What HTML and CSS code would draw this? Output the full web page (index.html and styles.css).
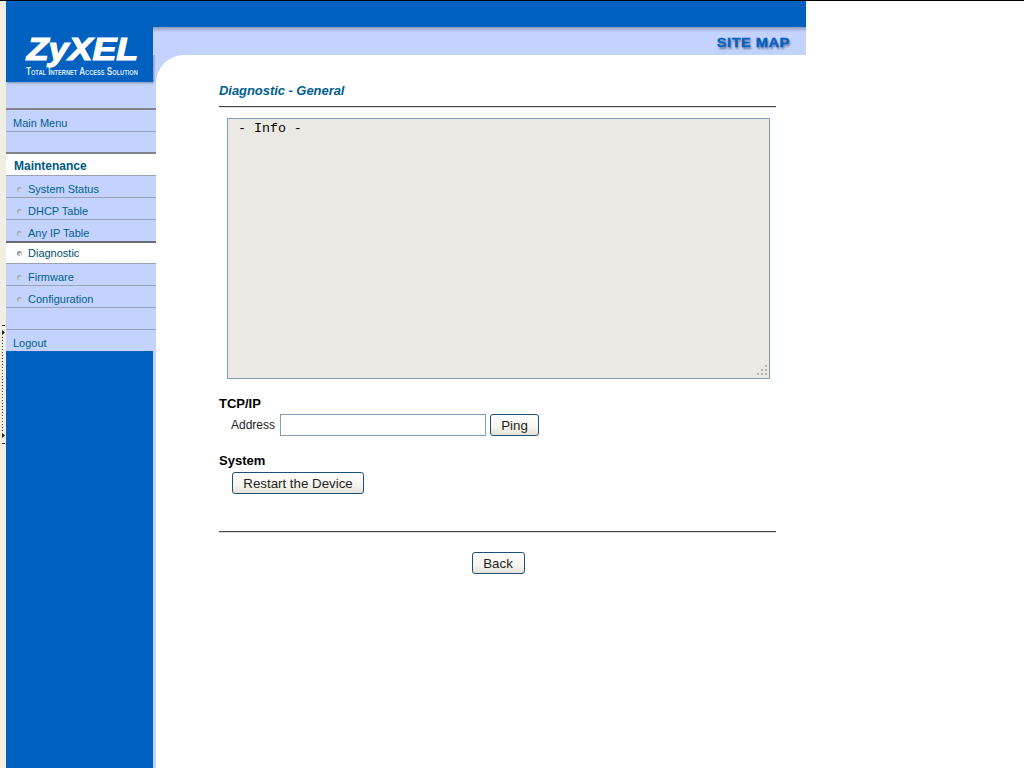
FILE: index.html
```html
<!DOCTYPE html>
<html lang="en">
<head>
<meta charset="utf-8">
<title>Diagnostic - General</title>
<link rel="stylesheet" href="styles.css">
</head>
<body>
<div class="page">
  <div class="strip">
    <svg width="6" height="767" viewBox="0 0 6 767">
      <rect x="2" y="324" width="3" height="1" fill="#333"/>
      <path d="M2 329l3 2.500-3 2.500z" fill="#222"/>
      <path d="M2 432l3 2.500-3 2.500z" fill="#222"/>
      <rect x="2" y="442" width="3" height="1" fill="#333"/>
      <line x1="2.500" y1="336" x2="2.500" y2="431" stroke="#444" stroke-dasharray="1 2"/>
    </svg>
  </div>
  <div class="frame">
    <aside class="side">
      <div class="logo">
        <div class="logo-name">ZyXEL</div>
        <div class="logo-tag">Total Internet Access Solution</div>
      </div>
      <nav class="menu">
        <div class="row top first">Main Menu</div>
        <div class="row"></div>
        <div class="row head dark">Maintenance</div>
        <div class="row sub"><i class="dot"></i>System Status</div>
        <div class="row sub"><i class="dot"></i>DHCP Table</div>
        <div class="row sub"><i class="dot"></i>Any IP Table</div>
        <div class="row sub current"><i class="dot"></i>Diagnostic</div>
        <div class="row sub"><i class="dot"></i>Firmware</div>
        <div class="row sub"><i class="dot"></i>Configuration</div>
        <div class="row"></div>
        <div class="row top">Logout</div>
      </nav>
      <div class="side-fill"></div>
    </aside>
    <div class="right">
      <div class="band-top"></div>
      <div class="band"><span class="sitemap">SITE MAP</span></div>
      <main class="content">
        <h1 class="title">Diagnostic - General</h1>
        <div class="info-wrap">
          <textarea class="info" readonly> - Info -</textarea>
          <svg class="grip" width="12" height="12" viewBox="0 0 12 12">
            <g fill="#b5b3a8">
              <rect x="9" y="1" width="2" height="2"/>
              <rect x="5" y="5" width="2" height="2"/><rect x="9" y="5" width="2" height="2"/>
              <rect x="1" y="9" width="2" height="2"/><rect x="5" y="9" width="2" height="2"/><rect x="9" y="9" width="2" height="2"/>
            </g>
          </svg>
        </div>
        <h2 class="section tcp">TCP/IP</h2>
        <div class="ping-row">
          <label class="addr" for="addr">Address</label>
          <input class="field" id="addr" type="text">
          <button class="btn ping">Ping</button>
        </div>
        <h2 class="section system">System</h2>
        <div class="restart-row"><button class="btn restart">Restart the Device</button></div>
        <div class="footer"><button class="btn back">Back</button></div>
      </main>
    </div>
  </div>
</div>
</body>
</html>
```
FILE: styles.css
```css
html, body { margin: 0; padding: 0; background: #fff; height: 768px; overflow: hidden; }
body { font-family: "Liberation Sans", Arial, sans-serif; }
.page { display: flex; height: 767px; border-top: 1px solid #000; }
.strip { width: 6px; background: #f1efe2; flex: none; }
.strip svg { display: block; }
.frame { display: flex; width: 800px; flex: none; }

.side { width: 150px; flex: none; display: flex; flex-direction: column; background: #c4d3fd; }
.logo { height: 81px; width: 147px; box-sizing: border-box; background: #0061c1; color: #fff; padding-top: 35px; box-shadow: 1px 1px 2px #7f8fb0; text-align: center; position: relative; }
.logo-name { font-size: 32px; line-height: 27px; font-weight: 700; font-style: italic; -webkit-text-stroke: 1.2px #fff; transform: scaleX(1.12); margin-left: 6px; }
.logo-tag { font-size: 10px; line-height: 11px; font-variant: small-caps; font-weight: 700; margin-top: 3px; white-space: nowrap; color: #dfe8fb; transform: scaleX(0.81); width: 177px; transform-origin: 20px 0; text-align: left; padding-left: 20px; box-sizing: border-box; }

.menu { margin-top: 26px; display: flex; flex-direction: column; }
.row { height: 21px; border-top: 1px solid #9aa3b5; font-size: 11px; line-height: 26px; color: #00608f; padding-left: 7px; white-space: nowrap; background: #c4d3fd; }
.first { border-top: 2px solid #80838c; }
.head { background: #fff; font-size: 12px; font-weight: 700; padding-left: 8px; line-height: 25px; color: #00587f; }
.dark { border-top: 2px solid #80838c; height: 21px; margin-top: -1px; }
.sub { padding-left: 22px; line-height: 26px; position: relative; }
.current { background: #fff; border-top: 2px solid #666a72; height: 20px; line-height: 21px; color: #00506f; }
.dot { position: absolute; left: 11px; top: 11px; width: 5px; height: 5px; border-radius: 50%; background: radial-gradient(circle at 65% 65%, #e4e7ee 0, #b4b9c6 45%, #7f8594 100%); }
.current .dot { background: radial-gradient(circle at 65% 65%, #fff 0, #bbb 35%, #444 100%); top: 8px; }
.side-fill { flex: 1; background: linear-gradient(90deg, #0061c1 147px, #c4d3fd 147px); }

.right { flex: 1; display: flex; flex-direction: column; min-width: 0; background: #c4d3fd; }
.band-top { height: 26px; background: #0061c1; margin-left: -3px; position: relative; }
.band { height: 28px; margin-left: -3px; position: relative; background: linear-gradient(180deg, #8f9ab8 0, #adbbe0 3px, #c4d3fd 5px); display: flex; align-items: center; justify-content: flex-end; padding-right: 16px; }
.sitemap { font-size: 12px; font-weight: 700; color: #0061c1; -webkit-text-stroke: 0.3px #0061c1; text-shadow: 1px 2px 2px #5a6a90; letter-spacing: 0.4px; transform: scaleX(1.22); transform-origin: right center; margin-top: 4px; }
.content { flex: 1; background: #fff; border-top-left-radius: 28px; padding: 28px 30px 0 63px; position: relative; }

.title { margin: 0; font-size: 13px; line-height: 16px; font-weight: 700; font-style: italic; color: #00608f; height: 23px; border-bottom: 1px solid #444; box-shadow: 0 1px 0 #ddd; letter-spacing: -0.05px; }
.info-wrap { position: relative; margin: 11px 0 0 8px; width: 543px; height: 261px; }
.info { display: block; box-sizing: border-box; width: 543px; height: 261px; margin: 0; padding: 2px; border: 1px solid #7f9db9; background: #ebe9e4; font-family: "Liberation Mono", monospace; font-size: 13.300px; line-height: 15px; color: #000; resize: none; outline: 0; overflow: hidden; }
.grip { position: absolute; right: 2px; bottom: 3px; }
.section { margin: 0; font-size: 13px; line-height: 16px; font-weight: 700; color: #000; }
.tcp { margin-top: 17px; }
.ping-row { display: flex; align-items: center; height: 22px; margin-top: 2px; padding-left: 12px; }
.addr { font-size: 12px; color: #222; margin-right: 3px; width: 46px; }
.field { box-sizing: border-box; width: 206px; height: 22px; margin: 0; padding: 0 2px; border: 1px solid #7f9db9; background: #fff; }
.btn { box-sizing: border-box; height: 22px; padding: 0; border: 1px solid #1c4f7c; border-radius: 3px; background: linear-gradient(180deg, #fff 0, #f6f5ef 60%, #e4e2d6 100%); font-family: "Liberation Sans", Arial, sans-serif; font-size: 13.300px; color: #222; }
.ping { width: 49px; margin-left: 4px; }
.system { margin-top: 17px; }
.restart-row { margin-top: 3px; padding-left: 13px; height: 22px; }
.restart { width: 132px; display: block; }
.footer { margin-top: 37px; border-top: 1px solid #444; box-shadow: inset 0 1px 0 #ddd; padding: 20px 0 0 1px; display: flex; justify-content: center; }
.back { width: 53px; }
```
